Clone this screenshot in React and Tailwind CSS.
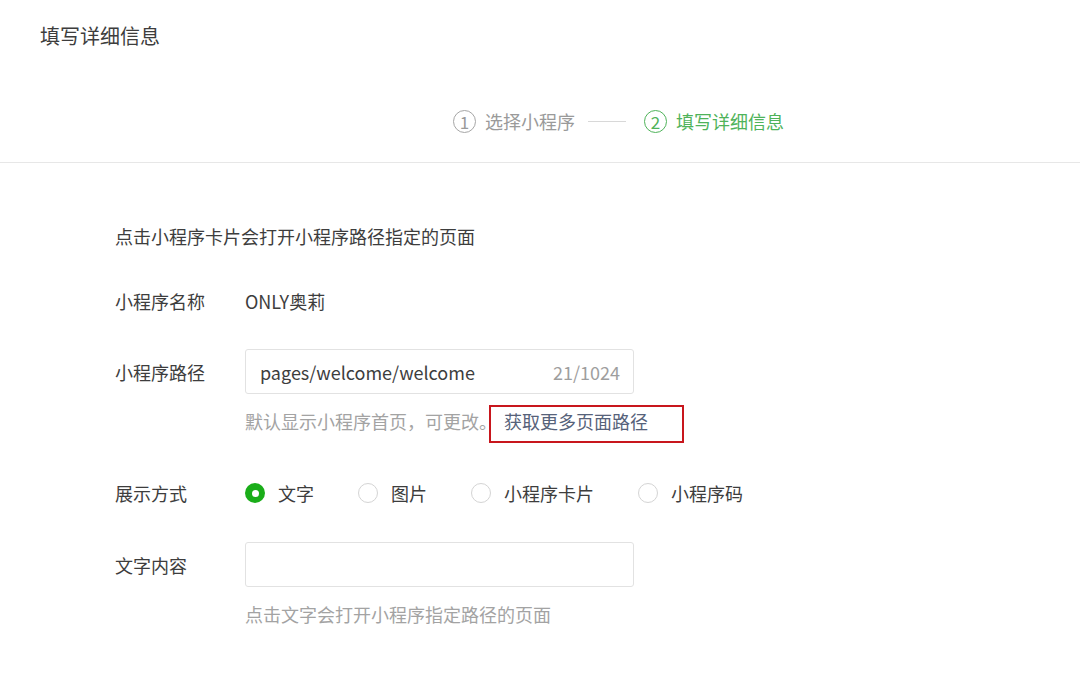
import React from "react";

const font = { fontFamily: '"Noto Sans CJK SC", "Noto Sans", sans-serif' };

function Radio({ checked, label }) {
  return (
    <div className="flex items-center gap-[13px]">
      {checked ? (
        <span className="w-[20px] h-[20px] rounded-full bg-[#1aad19] flex items-center justify-center">
          <span className="w-[7px] h-[7px] rounded-full bg-white" />
        </span>
      ) : (
        <span className="w-[20px] h-[20px] rounded-full border border-[#d4d4d4] bg-white" />
      )}
      <span className="text-[18px] leading-[24px] text-[#3d3d3d]">{label}</span>
    </div>
  );
}

export default function App() {
  return (
    <div className="w-[1080px] h-[699px] bg-white overflow-hidden" style={font}>
      <div className="border-b border-[#e7e7e7] pb-[29px]">
        <div className="pl-[40px] pt-[24px] text-[20px] leading-[24px] text-[#3d3d3d]">填写详细信息</div>
        <div className="mt-[61px] pl-[453px] flex items-center h-[24px]">
          <span className="w-[23px] h-[23px] rounded-full border-[1.5px] border-[#a6a6a6] text-[#9a9a9a] text-[17px] leading-none flex items-center justify-center">1</span>
          <span className="ml-[9px] text-[18px] leading-[24px] text-[#9a9a9a]">选择小程序</span>
          <span className="ml-[13px] mr-[18px] w-[38px] h-px bg-[#d8d8d8]" />
          <span className="w-[23px] h-[23px] rounded-full border-[1.5px] border-[#4fb35a] text-[#4fb35a] text-[17px] leading-none flex items-center justify-center">2</span>
          <span className="ml-[9px] text-[18px] leading-[24px] text-[#4fb35a]">填写详细信息</span>
        </div>
      </div>

      <div className="pl-[115px] pt-[61px] text-[18px] leading-[24px] text-[#3d3d3d]">
        <div>点击小程序卡片会打开小程序路径指定的页面</div>

        <div className="mt-[41px] flex items-center">
          <div className="w-[130px]">小程序名称</div>
          <div>ONLY奥莉</div>
        </div>

        <div className="mt-[36px] flex items-center">
          <div className="w-[130px]">小程序路径</div>
          <div className="w-[389px] h-[45px] border border-[#e2e2e2] rounded-[3px] flex items-center justify-between pl-[14px] pr-[13px]">
            <span className="text-[#3d3d3d]">pages/welcome/welcome</span>
            <span className="text-[#9e9e9e]">21/1024</span>
          </div>
        </div>

        <div className="mt-[15px] pl-[130px] flex items-center">
          <span className="text-[#a3a3a3]">默认显示小程序首页，可更改。</span>
          <span className="relative ml-[7px] text-[#56627a]">
            获取更多页面路径
            <span className="absolute left-[-15px] right-[-36px] top-[-4px] bottom-[-10px] border-2 border-[#c8161d]" />
          </span>
        </div>

        <div className="mt-[48px] flex items-center">
          <div className="w-[130px]">展示方式</div>
          <div className="flex items-center gap-[44px]">
            <Radio checked label="文字" />
            <Radio label="图片" />
            <Radio label="小程序卡片" />
            <Radio label="小程序码" />
          </div>
        </div>

        <div className="mt-[37px] flex items-center">
          <div className="w-[130px]">文字内容</div>
          <div className="w-[389px] h-[45px] border border-[#e2e2e2] rounded-[3px]" />
        </div>

        <div className="mt-[15px] pl-[130px] text-[#a3a3a3]">点击文字会打开小程序指定路径的页面</div>
      </div>
    </div>
  );
}
